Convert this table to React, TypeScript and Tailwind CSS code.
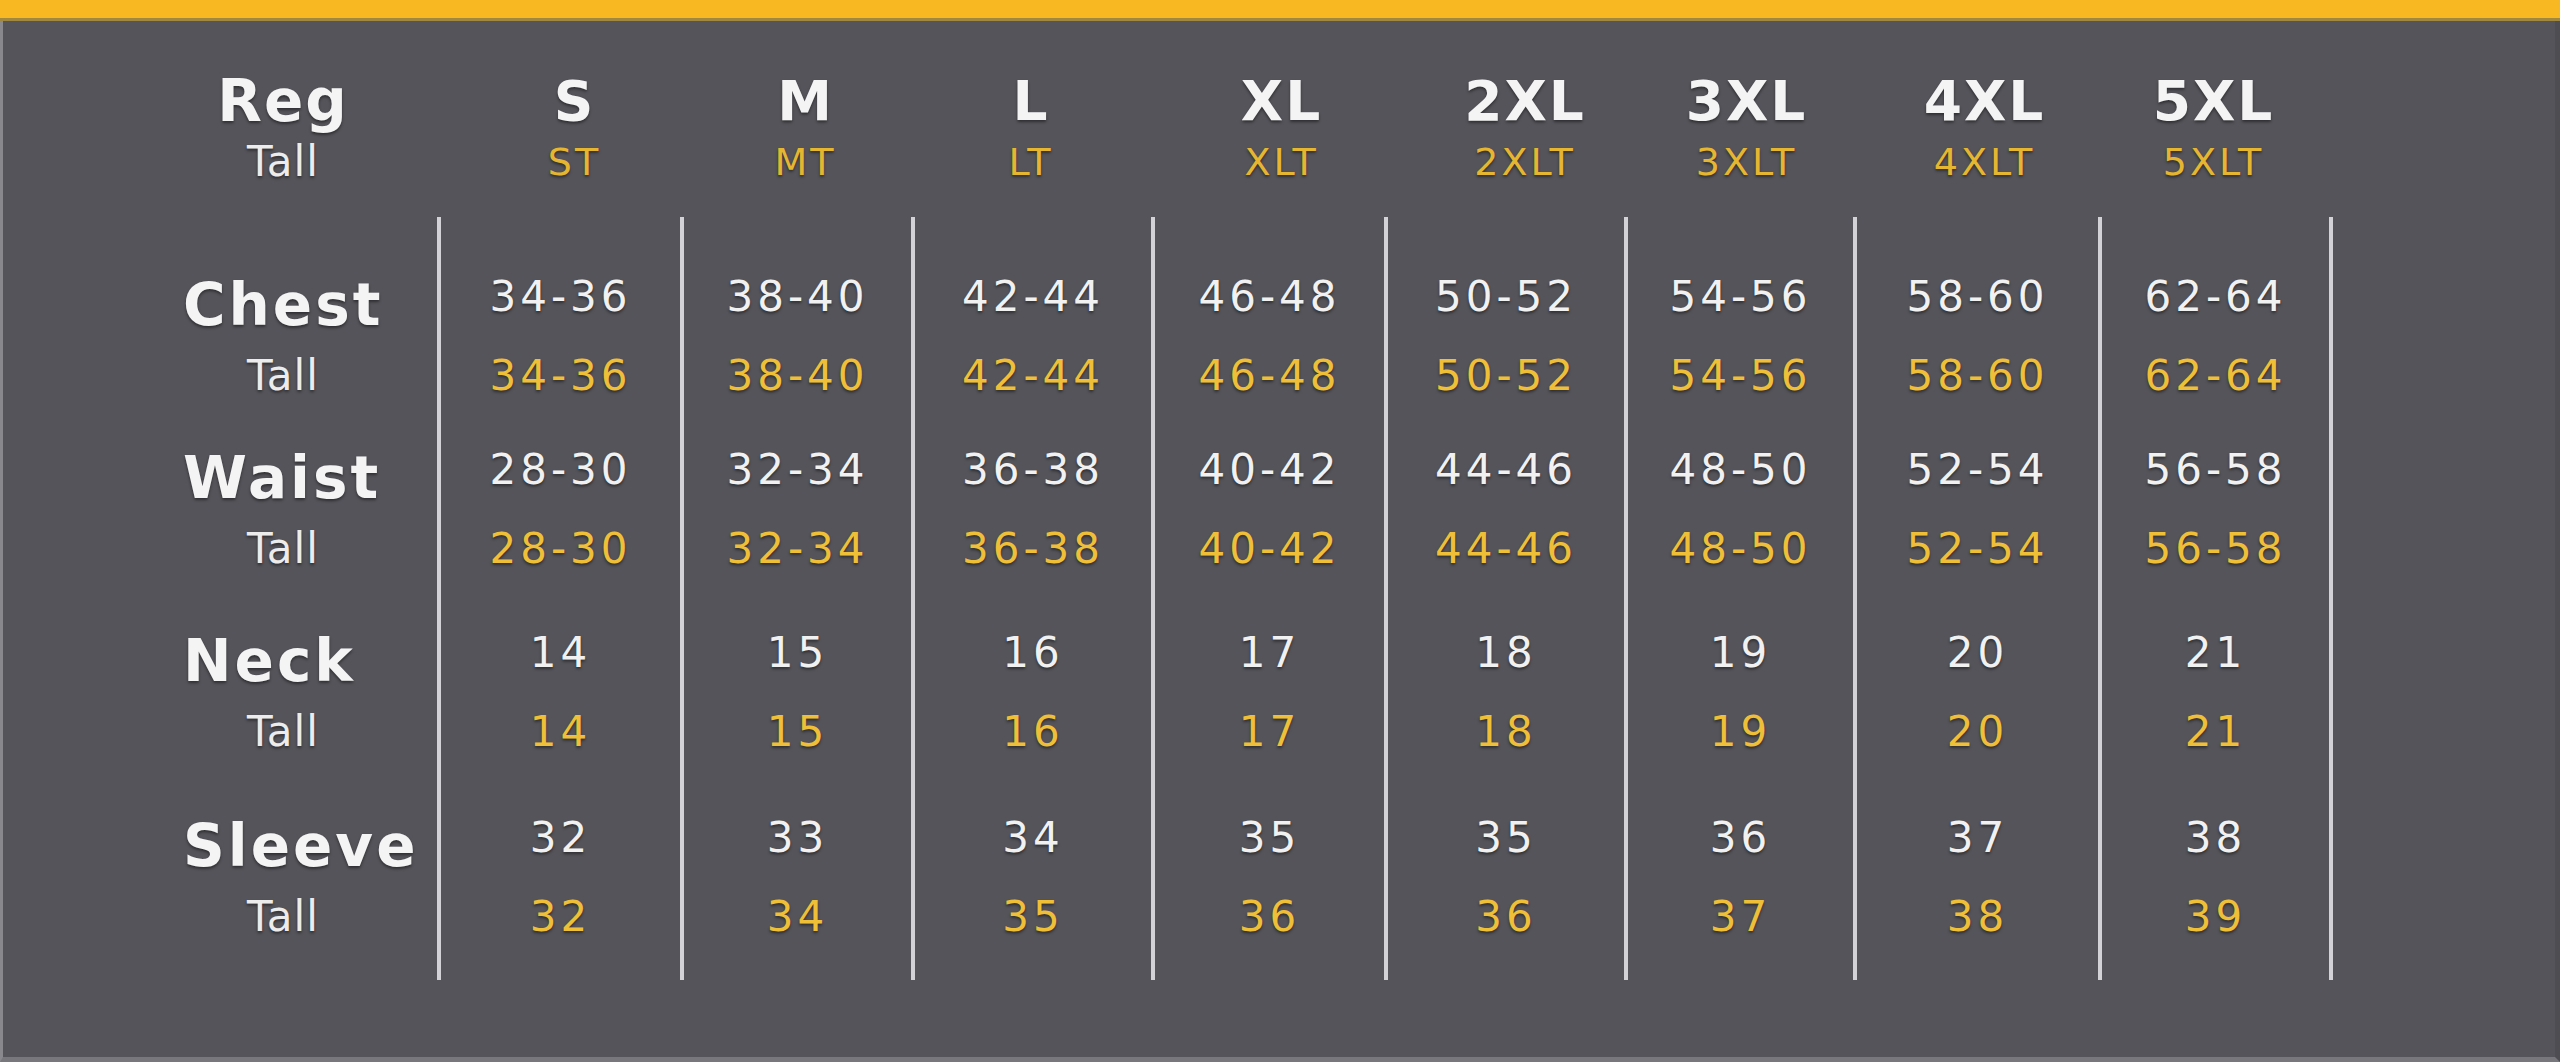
const sizes = [
  { w: 'w-[243px]', name: 'S', tall: 'ST', nudge: 'pl-[28px]', edge: '' },
  { w: 'w-[231px]', name: 'M', tall: 'MT', nudge: 'pl-[16px]', edge: '' },
  { w: 'w-[240px]', name: 'L', tall: 'LT', nudge: 'pr-[4px]', edge: '' },
  { w: 'w-[233px]', name: 'XL', tall: 'XLT', nudge: 'pl-[24px]', edge: '' },
  { w: 'w-[240px]', name: '2XL', tall: '2XLT', nudge: 'pl-[38px]', edge: '' },
  { w: 'w-[229px]', name: '3XL', tall: '3XLT', nudge: 'pl-[12px]', edge: '' },
  { w: 'w-[245px]', name: '4XL', tall: '4XLT', nudge: 'pl-[14px]', edge: '' },
  { w: 'w-[235px]', name: '5XL', tall: '5XLT', nudge: 'pr-[4px]', edge: 'border-r-4' },
];

// one group per measurement: regular row, then tall row
const groups = [
  {
    label: 'Chest',
    gap: 'mt-[40px]',
    reg: ['34-36', '38-40', '42-44', '46-48', '50-52', '54-56', '58-60', '62-64'],
    tall: ['34-36', '38-40', '42-44', '46-48', '50-52', '54-56', '58-60', '62-64'],
  },
  {
    label: 'Waist',
    gap: 'mt-[15px]',
    reg: ['28-30', '32-34', '36-38', '40-42', '44-46', '48-50', '52-54', '56-58'],
    tall: ['28-30', '32-34', '36-38', '40-42', '44-46', '48-50', '52-54', '56-58'],
  },
  {
    label: 'Neck',
    gap: 'mt-[25px]',
    reg: ['14', '15', '16', '17', '18', '19', '20', '21'],
    tall: ['14', '15', '16', '17', '18', '19', '20', '21'],
  },
  {
    label: 'Sleeve',
    gap: 'mt-[27px]',
    reg: ['32', '33', '34', '35', '35', '36', '37', '38'],
    tall: ['32', '34', '35', '36', '36', '37', '38', '39'],
  },
];

const shadow = '[text-shadow:0_2px_3px_rgba(0,0,0,0.45)]';

const App = () => {
  return (
    <div className="w-[2560px] h-[1062px] flex flex-col bg-[#55545a] overflow-hidden font-['DejaVu_Sans',sans-serif]">
      {/* Top accent bar */}
      <div className="h-[18px] shrink-0 bg-[#f8b822]" />
      <div className="h-[3px] shrink-0 bg-[#a2873f]" />

      <div className="flex-1 flex flex-col border-l-[3px] border-l-[#88888d] border-b-[5px] border-b-[#77777c] border-r-[5px] border-r-[#4e4d52]">
        {/* Size header */}
        <div className="flex mt-[50px] h-[60px]">
          <div className="w-[434px] pl-[180px] flex items-center">
            <div className={`w-[200px] text-center text-[58px] font-bold leading-none tracking-[2px] text-[#f4f4f4] ${shadow}`}>
              Reg
            </div>
          </div>
          {sizes.map((s) => (
            <div
              key={s.name}
              className={`${s.w} ${s.nudge} ${s.edge} border-l-4 border-transparent flex items-center justify-center text-[55px] font-bold leading-none tracking-[2px] text-[#f4f4f4] ${shadow}`}
            >
              {s.name}
            </div>
          ))}
        </div>
        <div className="flex mt-[6px] h-[50px]">
          <div className="w-[434px] pl-[180px] flex items-center">
            <div className={`w-[200px] text-center text-[42px] leading-none tracking-[1px] text-[#ececec] ${shadow}`}>
              Tall
            </div>
          </div>
          {sizes.map((s) => (
            <div
              key={s.tall}
              className={`${s.w} ${s.nudge} ${s.edge} border-l-4 border-transparent flex items-center justify-center text-[38px] leading-none tracking-[3px] text-[#e6b630] ${shadow}`}
            >
              {s.tall}
            </div>
          ))}
        </div>

        {/* Measurements */}
        <div className="flex mt-[30px] h-[763px]">
          <div className="w-[434px] pl-[180px] flex flex-col">
            {groups.map((g) => (
              <div key={g.label} className={g.gap}>
                <div className={`h-[79px] pt-[16px] flex items-center text-[58px] font-bold leading-none tracking-[3px] text-[#f4f4f4] ${shadow}`}>
                  {g.label}
                </div>
                <div className={`h-[79px] w-[200px] flex items-center justify-center text-[42px] leading-none tracking-[1px] text-[#ececec] ${shadow}`}>
                  Tall
                </div>
              </div>
            ))}
          </div>

          {sizes.map((s, i) => (
            <div key={s.name} className={`${s.w} ${s.edge} border-l-4 border-[#d3d3d7] flex flex-col`}>
              {groups.map((g) => (
                <div key={g.label} className={g.gap}>
                  <div className={`h-[79px] flex items-center justify-center text-[42px] leading-none tracking-[4px] text-[#f1f1f1] ${shadow}`}>
                    {g.reg[i]}
                  </div>
                  <div className={`h-[79px] flex items-center justify-center text-[42px] leading-none tracking-[4px] text-[#efbf38] ${shadow}`}>
                    {g.tall[i]}
                  </div>
                </div>
              ))}
            </div>
          ))}
        </div>
      </div>
    </div>
  );
};

export default App;
